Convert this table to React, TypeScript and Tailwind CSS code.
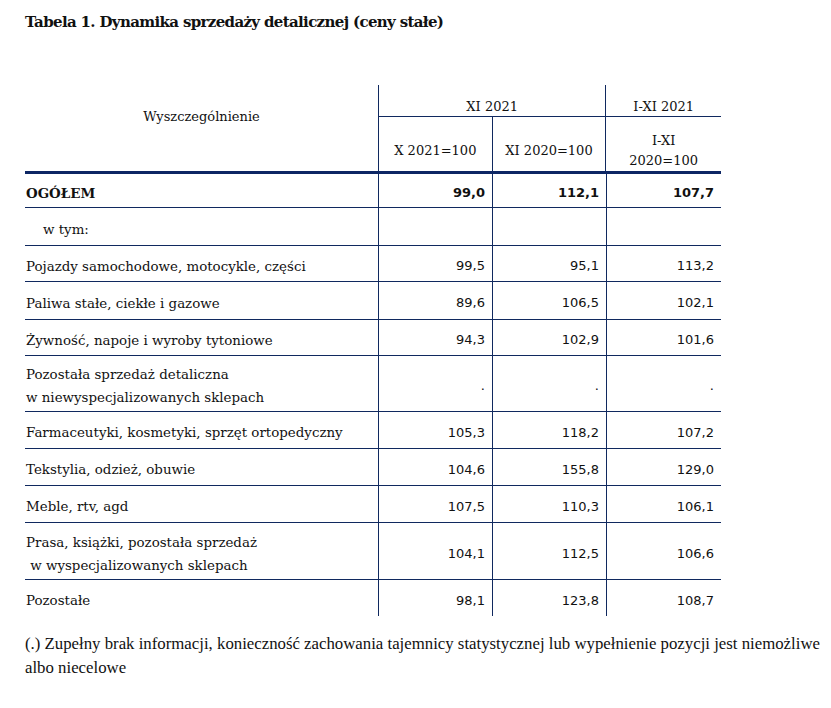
import React from 'react';

type Row = {
  label: string[];
  values: string[];
  h: string;
  bold?: boolean;
  indent?: boolean;
};

const rows: Row[] = [
  { label: ['OGÓŁEM'], values: ['99,0', '112,1', '107,7'], h: 'h-[34px]', bold: true },
  { label: ['w tym:'], values: ['', '', ''], h: 'h-[38px]', indent: true },
  { label: ['Pojazdy samochodowe, motocykle, części'], values: ['99,5', '95,1', '113,2'], h: 'h-[36px]' },
  { label: ['Paliwa stałe, ciekłe i gazowe'], values: ['89,6', '106,5', '102,1'], h: 'h-[38px]' },
  { label: ['Żywność, napoje i wyroby tytoniowe'], values: ['94,3', '102,9', '101,6'], h: 'h-[36px]' },
  {
    label: ['Pozostała sprzedaż detaliczna', 'w niewyspecjalizowanych sklepach'],
    values: ['.', '.', '.'],
    h: 'h-[56px]',
  },
  { label: ['Farmaceutyki, kosmetyki, sprzęt ortopedyczny'], values: ['105,3', '118,2', '107,2'], h: 'h-[37px]' },
  { label: ['Tekstylia, odzież, obuwie'], values: ['104,6', '155,8', '129,0'], h: 'h-[37px]' },
  { label: ['Meble, rtv, agd'], values: ['107,5', '110,3', '106,1'], h: 'h-[37px]' },
  {
    label: ['Prasa, książki, pozostała sprzedaż', '\u00a0w wyspecjalizowanych sklepach'],
    values: ['104,1', '112,5', '106,6'],
    h: 'h-[57px]',
  },
  { label: ['Pozostałe'], values: ['98,1', '123,8', '108,7'], h: 'h-[36px]' },
];

export default function App() {
  return (
    <div className="min-h-[708px] w-[831px] bg-white text-[#111] font-['DejaVu_Serif',serif]">
      <div className="pl-[25px] pt-[12px]">
        <h1 className="text-[15px] font-bold leading-[20px] tracking-[-0.65px]">
          Tabela 1. Dynamika sprzedaży detalicznej (ceny stałe)
        </h1>

        {/* table */}
        <div className="mt-[53px] w-[696px] text-[13.4px]">
          {/* header */}
          <div className="flex h-[86px] text-[13px]">
            <div className="flex w-[353px] justify-center pt-[22px]">Wyszczególnienie</div>
            <div className="flex w-[343px] flex-col border-l border-[#10295f]">
              <div className="flex h-[36px] border-b border-[#10295f]">
                <div className="flex w-[227px] items-end justify-center">XI 2021</div>
                <div className="flex w-[116px] items-end justify-center border-l border-[#10295f]">
                  I-XI 2021
                </div>
              </div>
              <div className="flex flex-1">
                <div className="flex w-[113px] items-center justify-center pt-[13px]">X 2021=100</div>
                <div className="flex w-[114px] items-center justify-center border-l border-[#10295f] pt-[13px]">
                  XI 2020=100
                </div>
                <div className="flex w-[116px] flex-col items-center justify-center border-l border-[#10295f] pt-[14px] leading-[20px]">
                  <span>I-XI</span>
                  <span>2020=100</span>
                </div>
              </div>
            </div>
          </div>
          <div className="h-[3px] bg-[#0d2664]" />

          {rows.map((r, i) => (
            <div
              key={i}
              className={`flex ${r.h} ${i < rows.length - 1 ? 'border-b border-[#10295f]' : ''}`}
            >
              <div
                className={`flex w-[353px] flex-col justify-center pt-[5px] leading-[23px] ${
                  r.indent ? 'pl-[18px]' : 'pl-[1px]'
                } ${r.bold ? 'font-bold' : ''}`}
              >
                {r.label.map((l, j) => (
                  <span key={j}>{l}</span>
                ))}
              </div>
              {r.values.map((v, j) => (
                <div
                  key={j}
                  className={`flex ${j === 2 ? 'w-[115px]' : 'w-[114px]'} items-center justify-end border-l border-[#10295f] pr-[7px] pt-[5px] text-[13px] font-['DejaVu_Sans',sans-serif] ${
                    r.bold ? 'font-bold' : ''
                  }`}
                >
                  {v}
                </div>
              ))}
            </div>
          ))}
        </div>

        <p className="mt-[16px] w-[800px] text-[16.8px] leading-[24px] font-['Liberation_Serif',serif]">
          (.) Zupełny brak informacji, konieczność zachowania tajemnicy statystycznej lub wypełnienie pozycji jest
          niemożliwe albo niecelowe
        </p>
      </div>
    </div>
  );
}
